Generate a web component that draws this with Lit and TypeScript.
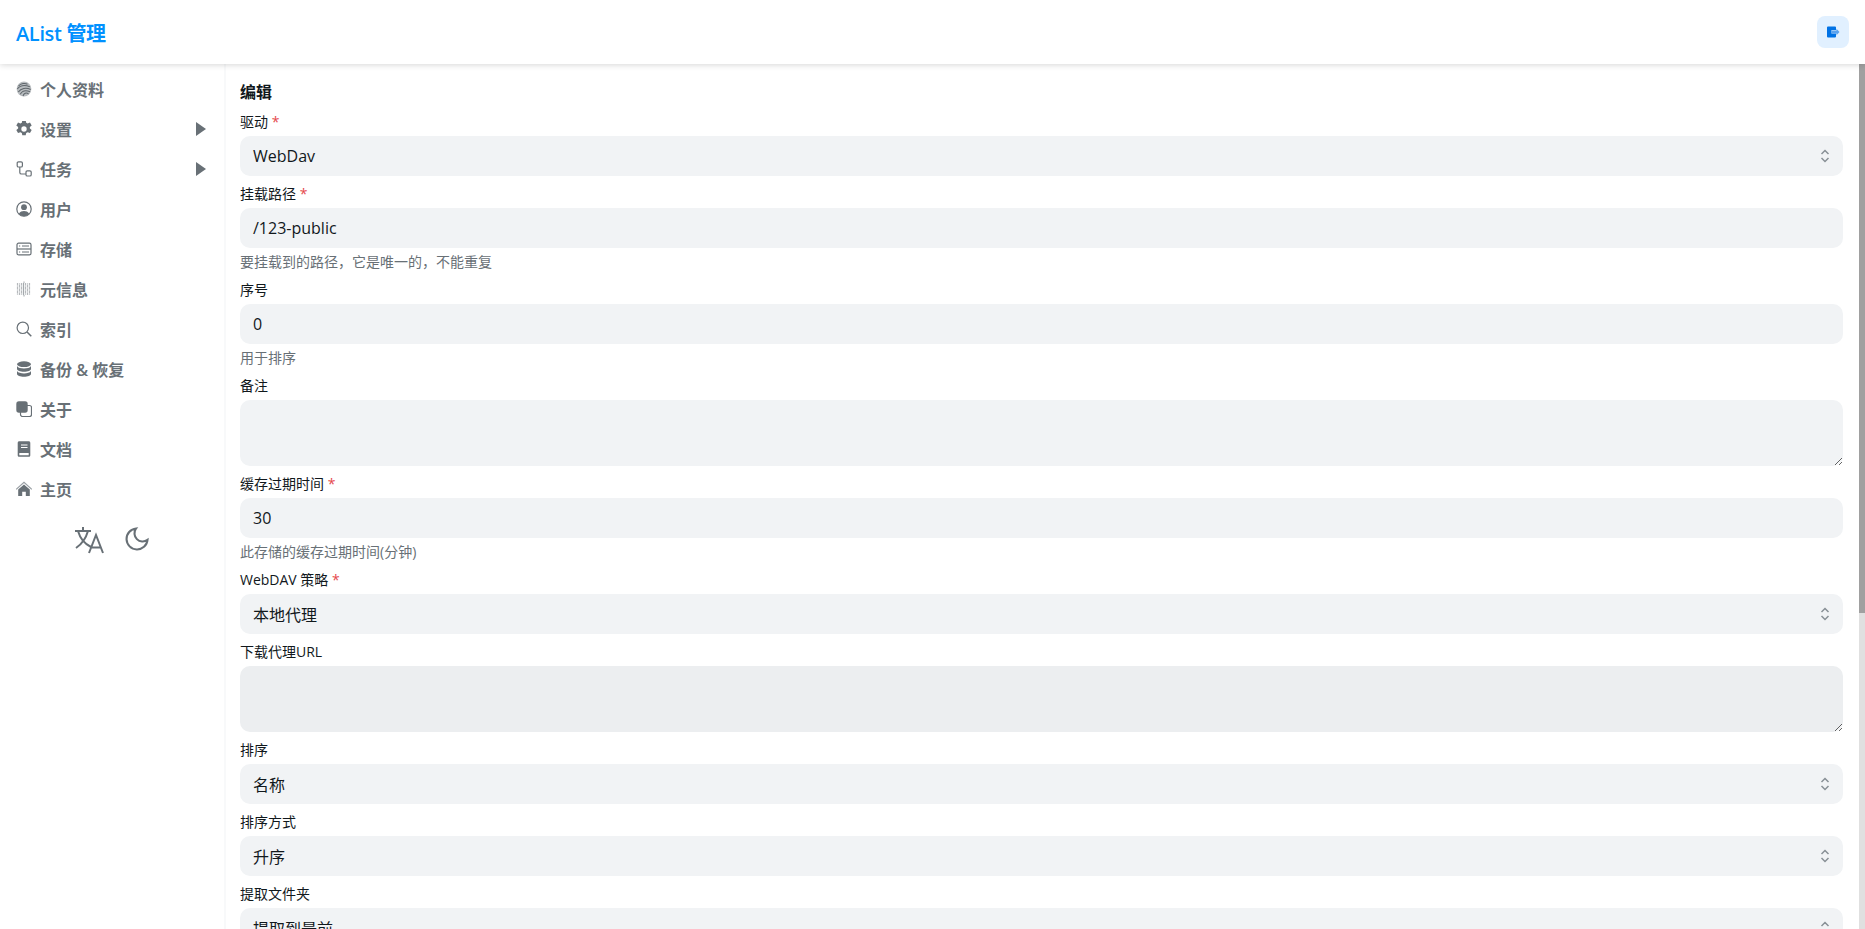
import { LitElement, html, css, svg } from "lit";
import { customElement } from "lit/decorators.js";

const I = (body: unknown) => html`<svg class="ic" viewBox="0 0 16 16" fill="none" stroke="currentColor" stroke-width="1.2">${body}</svg>`;

const metaCells = [1.5, 3.5, 5.5, 7.5, 9.5, 11.5, 13.5].flatMap((x, i) =>
  [3, 5, 7, 9, 11, 13].map((y, j) =>
    svg`<rect x=${x - 0.6} y=${y - 0.6} width="1.2" height="1.2" fill=${i === 3 ? "#687076" : (i + j) % 2 ? "#aeb3b7" : "#868c91"} stroke="none"/>`));

const icons: Record<string, unknown> = {
  finger: I(svg`<circle cx="8" cy="8" r="7.4" fill="#b9bdc0" stroke="none"/>
    <g stroke="#5f666b" stroke-width="1.05" fill="none"><path d="M2.500 5C5 2.300 9 1.800 11.500 3.200"/><path d="M1.300 8C4 4.700 9 3.800 13.800 5.800"/><path d="M2.300 11C5 7.200 10 6.200 14.700 8.500"/><path d="M4.300 13.300C6 10 9 8.700 14 10.700"/><path d="M7 15C8 12.300 10 11.300 12.500 12.800"/></g>`),
  gear: I(svg`<g transform="translate(8 8) scale(1.22) translate(-8 -8)"><path fill="currentColor" stroke="none" fill-rule="evenodd" d="M6.600.9h2.800l.4 1.900 1.200.6 1.900-.7 1.400 2.400-1.500 1.300v1.200l1.500 1.300-1.400 2.400-1.900-.7-1.200.6-.4 1.900H6.600l-.4-1.900-1.200-.6-1.900.7-1.400-2.400 1.500-1.300V6.400L1.700 5.100 3.100 2.700l1.900.7 1.200-.6zM8 5.800a2.200 2.200 0 1 0 0 4.400 2.200 2.200 0 0 0 0-4.400z"/></g>`),
  route: I(svg`<rect x="1.200" y="0.800" width="5.200" height="5.200" rx="1.300"/><rect x="10" y="9.800" width="5.200" height="5.200" rx="1.300"/><path d="M3.800 6v5.400c0 1 .8 1.600 1.800 1.600H10"/>`),
  user: I(svg`<circle cx="8" cy="8" r="7.200"/><circle cx="8" cy="6.200" r="2.900" fill="currentColor" stroke="none"/><path fill="currentColor" stroke="none" d="M2.800 12.800C4 10.600 6 10 8 10s4 .6 5.200 2.800C12 14.300 10 15.200 8 15.200s-4-.9-5.200-2.400z"/>`),
  storage: I(svg`<rect x="1" y="2.200" width="14" height="11.600" rx="1.600"/><path d="M1 8h14"/><path d="M3 5h1.200M6 5h7M3 11h1.200M6 11h7" stroke-width="1"/>`),
  meta: I(svg`${metaCells}<rect x="7.400" y="0.500" width="1.200" height="1.400" fill="#aeb3b7" stroke="none"/><rect x="7.400" y="14" width="1.200" height="1.500" fill="#aeb3b7" stroke="none"/>`),
  search: I(svg`<circle cx="6.800" cy="6.800" r="5.700"/><path d="M11 11l4.300 4.300" stroke-width="1.500"/>`),
  db: I(svg`<g fill="currentColor" stroke="none"><ellipse cx="8" cy="3.200" rx="7" ry="2.900"/><path d="M1 5.100C2 6.900 5 7.500 8 7.500s6-.6 7-2.400V8c0 1.600-3.100 2.800-7 2.800S1 9.600 1 8z"/><path d="M1 10C2 11.800 5 12.400 8 12.400s6-.6 7-2.400v3c0 1.600-3.100 2.800-7 2.800S1 14.600 1 13z"/></g>`),
  copy: I(svg`<rect x="4.500" y="4.500" width="11" height="11" rx="2"/><rect x="0.300" y="0.300" width="11.400" height="11.400" rx="2.600" fill="currentColor" stroke="none"/>`),
  book: I(svg`<path fill="currentColor" stroke="none" fill-rule="evenodd" d="M3.300.2h9.400c.9 0 1.600.7 1.600 1.600v12.400c0 .9-.7 1.600-1.600 1.600H3.300c-.9 0-1.600-.7-1.600-1.600V1.800C1.700.9 2.400.2 3.300.2zM3.300 12v2.200h9.400V12zM5 3.400v1h6.500v-1zM5 6v1h6.500V6z"/>`),
  home: I(svg`<path d="M.2 8.400L8 1.200l7.800 7.200" stroke-width="1.200" stroke="#9aa0a5"/><path fill="currentColor" stroke="none" d="M8 3.400l5.800 5.200v6.400H9.800v-4.200H6.200V15H2.200V8.600z"/>`),
};

const nav: [string, string, boolean?][] = [
  ["finger", "个人资料"], ["gear", "设置", true], ["route", "任务", true], ["user", "用户"],
  ["storage", "存储"], ["meta", "元信息"], ["search", "索引"], ["db", "备份 & 恢复"],
  ["copy", "关于"], ["book", "文档"], ["home", "主页"],
];

type Field = { label: string; req?: boolean; kind: "select" | "input" | "area"; value?: string; hint?: string; dark?: boolean };
const fields: Field[] = [
  { label: "驱动", req: true, kind: "select", value: "WebDav" },
  { label: "挂载路径", req: true, kind: "input", value: "/123-public", hint: "要挂载到的路径，它是唯一的，不能重复" },
  { label: "序号", kind: "input", value: "0", hint: "用于排序" },
  { label: "备注", kind: "area" },
  { label: "缓存过期时间", req: true, kind: "input", value: "30", hint: "此存储的缓存过期时间(分钟)" },
  { label: "WebDAV 策略", req: true, kind: "select", value: "本地代理" },
  { label: "下载代理URL", kind: "area", dark: true },
  { label: "排序", kind: "select", value: "名称" },
  { label: "排序方式", kind: "select", value: "升序" },
  { label: "提取文件夹", kind: "select", value: "提取到最前" },
];

@customElement("app-root")
export class AppRoot extends LitElement {
  static styles = css`
    :host {
      display: flex;
      flex-direction: column;
      height: 100vh;
      overflow: hidden;
      background: #fff;
      color: #11181c;
      font-family: "Open Sans", "Noto Sans CJK SC", sans-serif;
    }
    .head {
      flex: 0 0 64px;
      box-sizing: border-box;
      display: flex;
      align-items: center;
      justify-content: space-between;
      padding: 0 16px;
      background: #fff;
      box-shadow: 0 1px 6px rgba(0, 0, 0, 0.16);
      position: relative;
      z-index: 2;
    }
    .brand { font-size: 20px; font-weight: 600; color: #0091ff; letter-spacing: -0.35px; }
    .logout {
      width: 32px; height: 32px; border-radius: 8px; background: #e1f0ff;
      display: flex; align-items: center; justify-content: center; color: #0072e5;
    }
    .logout svg { width: 14px; height: 14px; display: block; }
    .body { flex: 1; min-height: 0; display: flex; }
    .side {
      flex: 0 0 224px;
      border-right: 2px solid #f8f9fa;
      padding-top: 5px;
      box-sizing: content-box;
    }
    .item {
      height: 40px; display: flex; align-items: center; padding: 0 16px;
      color: #687076; font-size: 16px; font-weight: 600; gap: 8px;
    }
    .ic { width: 16px; height: 16px; flex: none; display: block; }
    .item .lbl { flex: 1; }
    .arrow { width: 10px; height: 14px; margin-right: 2px; flex: none; fill: #687076; display: block; }
    .tools { display: flex; justify-content: center; gap: 19px; padding-top: 16px; color: #687076; }
    .tools svg { display: block; }
    .main { flex: 1; min-width: 0; overflow: hidden; }
    .scrollbar { flex: 0 0 6px; background: #e0e0e0; }
    .thumb { height: 549px; background: #a0a0a0; }
    .content {
      box-sizing: border-box;
      padding: 16px 16px 16px 14px;
      display: flex;
      flex-direction: column;
      gap: 8px;
    }
    h1 { margin: 0; font-size: 16px; line-height: 24px; font-weight: 600; }
    .field { display: flex; flex-direction: column; }
    .label { font-size: 14px; line-height: 20px; font-weight: 400; margin-bottom: 4px; }
    .star { color: #e5484d; }
    .ctl {
      box-sizing: border-box;
      height: 40px;
      flex: none;
      border-radius: 10px;
      background: #f1f3f5;
      padding: 0 13px;
      font-size: 16px;
      display: flex;
      align-items: center;
      justify-content: space-between;
    }
    .ctl svg { width: 16px; height: 16px; color: #889096; margin-right: -3px; display: block; }
    textarea {
      display: block;
      box-sizing: border-box;
      width: 100%;
      height: 66px;
      margin: 0;
      border: 0;
      outline: 0;
      border-radius: 10px;
      background: #f1f3f5;
      resize: vertical;
      padding: 8px 13px;
    }
    textarea.dark { background: #eceef0; }
    .hint { font-size: 14px; line-height: 20px; margin-top: 4px; color: #687076; }
  `;

  private chevrons() {
    return html`<svg viewBox="0 0 16 16" fill="none" stroke="currentColor" stroke-width="1.500"><path d="M4.500 6L8 2.500 11.500 6M4.500 10L8 13.500 11.500 10"/></svg>`;
  }

  private control(f: Field) {
    if (f.kind === "area") return html`<textarea class=${f.dark ? "dark" : ""}></textarea>`;
    return html`<div class="ctl"><span>${f.value}</span>${f.kind === "select" ? this.chevrons() : ""}</div>`;
  }

  render() {
    return html`
      <header class="head">
        <div class="brand">AList 管理</div>
        <div class="logout">
          <svg viewBox="0 0 14 14"><path fill="currentColor" d="M1 2.500a1 1 0 0 1 1-1h7a1 1 0 0 1 1 1V5H5.500v3.500H10v3a1 1 0 0 1-1 1H2a1 1 0 0 1-1-1z"/><path fill="#5aa2ee" d="M5.500 5.500H10.500V3.800L13.500 7l-3 3.200V8.500H5.500z"/></svg>
        </div>
      </header>
      <div class="body">
        <nav class="side">
          ${nav.map(([ic, t, more]) => html`<div class="item">${icons[ic]}<span class="lbl">${t}</span>${more ? html`<svg class="arrow" viewBox="0 0 10 14"><path d="M0 0l10 7-10 7z"/></svg>` : ""}</div>`)}
          <div class="tools">
            <svg width="30" height="30" viewBox="0 0 30 30" fill="none" stroke="currentColor" stroke-width="2"><path d="M1 6H17M9 2V6M4 6C6 13 11 19 17 22M14 6C12 13 8 19 2 23M15 28L22 10L29 28M17 22.500H27"/></svg>
            <svg width="28" height="28" viewBox="0 0 24 24" fill="none" stroke="currentColor" stroke-width="1.800"><path d="M21 12.790A9 9 0 1 1 11.210 3 7 7 0 0 0 21 12.790z"/></svg>
          </div>
        </nav>
        <main class="main">
          <div class="content">
            <h1>编辑</h1>
            ${fields.map((f) => html`<div class="field">
              <div class="label">${f.label}${f.req ? html` <span class="star">*</span>` : ""}</div>
              ${this.control(f)}
              ${f.hint ? html`<div class="hint">${f.hint}</div>` : ""}
            </div>`)}
          </div>
        </main>
        <div class="scrollbar"><div class="thumb"></div></div>
      </div>
    `;
  }
}
